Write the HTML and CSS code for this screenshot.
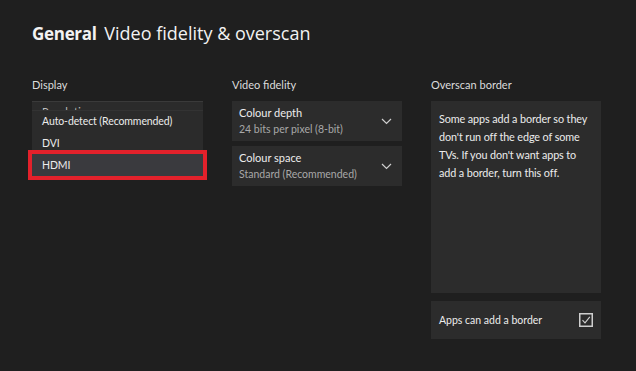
FILE: index.html
```html
<!DOCTYPE html>
<html lang="en">
<head>
  <meta charset="UTF-8">
  <title>Video fidelity &amp; overscan</title>
  <link rel="stylesheet" href="styles.css">
</head>
<body>
  <h1 class="title"><b>General</b> Video fidelity &amp; overscan</h1>

  <div class="columns">
    <div class="col">
      <div class="label">Display</div>
      <div class="dropdown">
        <div class="peek">
          <div class="select-name">Resolution</div>
        </div>
        <ul class="menu">
          <li class="menu-item">Auto-detect (Recommended)</li>
          <li class="menu-item">DVI</li>
          <li class="menu-item selected">HDMI</li>
        </ul>
      </div>
    </div>

    <div class="col">
      <div class="label">Video fidelity</div>
      <div class="select">
        <div>
          <div class="select-name">Colour depth</div>
          <div class="select-value">24 bits per pixel (8-bit)</div>
        </div>
        <svg class="chevron" width="11" height="7" viewBox="0 0 11 7"><path d="M1 1 L5.5 5.5 L10 1" fill="none" stroke="#cfcfcf" stroke-width="1.2"/></svg>
      </div>
      <div class="select">
        <div>
          <div class="select-name">Colour space</div>
          <div class="select-value">Standard (Recommended)</div>
        </div>
        <svg class="chevron" width="11" height="7" viewBox="0 0 11 7"><path d="M1 1 L5.5 5.5 L10 1" fill="none" stroke="#cfcfcf" stroke-width="1.2"/></svg>
      </div>
    </div>

    <div class="col">
      <div class="label">Overscan border</div>
      <div class="info">Some apps add a border so they don't run off the edge of some TVs. If you don't want apps to add a border, turn this off.</div>
      <div class="toggle-row">
        <span>Apps can add a border</span>
        <svg class="check" width="14" height="14" viewBox="0 0 14 14"><rect x="0.75" y="0.75" width="12.5" height="12.5" fill="none" stroke="#cfcfcf" stroke-width="1.5"/><path d="M3.5 7.2 L6 9.8 L10.8 3.8" fill="none" stroke="#cfcfcf" stroke-width="1.1"/></svg>
      </div>
    </div>
  </div>
</body>
</html>
```

FILE: styles.css
```css
body {
  margin: 0;
  background-color: #1f1f1f;
  color: #e6e6e6;
  font-family: Lato, "Open Sans", sans-serif;
  width: 636px;
  height: 371px;
  overflow: hidden;
}
.title {
  margin: 20px 0 0 32px;
  font-family: "Open Sans", sans-serif;
  font-size: 18px;
  line-height: 26px;
  font-weight: normal;
  color: #f2f2f2;
}
.title b {
  font-weight: bold;
  font-size: 17px;
  letter-spacing: -0.3px;
  margin-right: 3px;
}
.columns {
  display: grid;
  grid-template-columns: 171px 170px 170px;
  column-gap: 29px;
  padding: 31px 0 0 32px;
}
.label {
  font-size: 11px;
  line-height: 14px;
  color: #dcdcdc;
  margin-bottom: 9px;
}
.select {
  display: flex;
  align-items: center;
  justify-content: space-between;
  height: 40px;
  padding: 0 10px 0 7px;
  margin-bottom: 5px;
  background-color: #2c2c2c;
  box-sizing: border-box;
}
.select-name {
  font-size: 11px;
  line-height: 16px;
  color: #ececec;
}
.select-value {
  font-size: 10.5px;
  line-height: 17px;
  color: #a8a8a8;
}
.dropdown {
  background-color: #2b2b2b;
  border-top: 1px solid #3a3a3a;
  margin-top: 3px;
}
.peek {
  height: 8px;
  overflow: hidden;
  padding: 0 10px;
}
.peek .select-name {
  line-height: 5px;
  padding-top: 7px;
  color: #bdbdbd;
}
.menu {
  margin: 0;
  padding: 0;
  list-style: none;
  border-top: 1px solid #333;
}
.menu-item {
  height: 22px;
  line-height: 22px;
  padding: 0 10px;
  font-size: 10.5px;
  letter-spacing: -0.1px;
  color: #ececec;
}
.menu-item:first-child {
  line-height: 21px;
  height: 21px;
}
.menu-item.selected {
  background-color: #3a3a3e;
  outline: 4px solid #e3212b;
}
.info {
  height: 192px;
  padding: 9px 8px;
  box-sizing: border-box;
  background-color: #2c2c2c;
  font-size: 10.8px;
  letter-spacing: -0.1px;
  line-height: 18px;
  color: #ececec;
  margin-bottom: 8px;
}
.toggle-row {
  display: flex;
  align-items: center;
  justify-content: space-between;
  height: 38px;
  padding: 0 8px;
  background-color: #2c2c2c;
  font-size: 10.5px;
  color: #ececec;
}
```
